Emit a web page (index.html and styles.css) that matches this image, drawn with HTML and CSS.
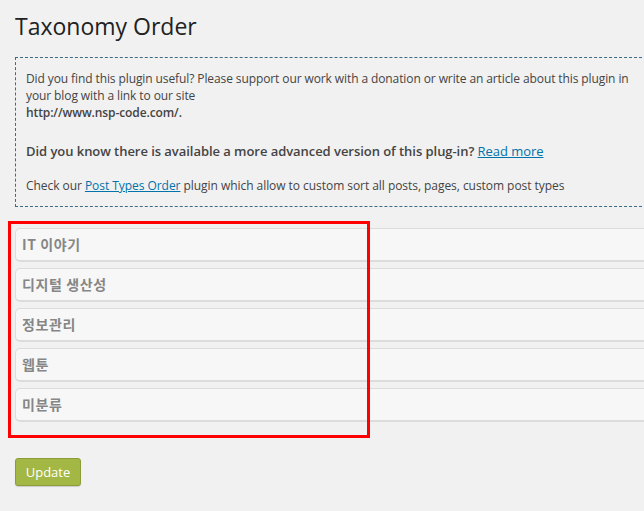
FILE: index.html
```html
<!DOCTYPE html>
<html>
<head>
<meta charset="utf-8">
<link rel="stylesheet" href="styles.css">
</head>
<body>
<div class="wrap">
  <h2 class="title">Taxonomy Order</h2>
  <div class="notice">
    <p class="notice-p">Did you find this plugin useful? Please support our work with a donation or write an article about this plugin in your blog with a link to our site<br><strong>http://www.nsp-code.com/.</strong></p>
    <p class="notice-adv">Did you know there is available a more advanced version of this plug-in? <a href="#" class="link">Read more</a></p>
    <p class="notice-small">Check our <a href="#" class="link">Post Types Order</a> plugin which allow to custom sort all posts, pages, custom post types</p>
  </div>
  <ul class="terms">
    <li class="term">IT 이야기</li>
    <li class="term">디지털 생산성</li>
    <li class="term">정보관리</li>
    <li class="term">웹툰</li>
    <li class="term">미분류</li>
  </ul>
  <button class="update">Update</button>
</div>
<div class="highlight"></div>
</body>
</html>
```
FILE: styles.css
```css
html, body {
  margin: 0;
  padding: 0;
  background: #f1f1f1;
  overflow: hidden;
}
body {
  font-family: "Open Sans", "Noto Sans", sans-serif;
  font-size: 12px;
  color: #444;
  position: relative;
  width: 644px;
  height: 511px;
}
.wrap {
  padding-left: 15px;
  width: 700px;
}
.title {
  font-size: 23px;
  font-weight: 400;
  line-height: 29px;
  color: #222;
  margin: 0;
  padding: 12px 0 0;
}
.notice {
  margin-top: 16px;
  width: 620px;
  border: 1px dashed #3a6c88;
  padding: 12px 10px 12px;
}
.notice p {
  margin: 0;
}
.notice-p {
  font-size: 12px;
  line-height: 17px;
  letter-spacing: -0.1px;
}
.notice-p strong {
  font-weight: 600;
}
.notice-adv {
  font-size: 13px;
  font-weight: 600;
  line-height: 20px;
  padding-top: 20px;
  letter-spacing: -0.05px;
}
.notice-adv .link {
  font-weight: 400;
}
.notice-small {
  font-size: 12px;
  line-height: 17px;
  padding-top: 16px;
  letter-spacing: -0.05px;
}
.link {
  color: #0073aa;
  text-decoration: underline;
}
.terms {
  list-style: none;
  margin: 21px 0 0;
  padding: 0;
}
.term {
  box-sizing: border-box;
  height: 34px;
  margin-bottom: 6px;
  background: #f7f7f7;
  border: 1px solid #dcdcdc;
  border-bottom: 2px solid #dcdcdc;
  border-radius: 5px 0 0 5px;
  padding-left: 6px;
  font-family: "Noto Sans CJK KR", sans-serif;
  font-weight: 700;
  font-size: 14px;
  letter-spacing: 0.6px;
  line-height: 30px;
  color: #868686;
}
.update {
  margin-top: 30px;
  width: 66px;
  height: 28px;
  background: #a3b745;
  border: 1px solid #8b9c3a;
  border-radius: 3px;
  color: #fff;
  font-family: "Open Sans", sans-serif;
  font-size: 13px;
  padding: 0;
  box-shadow: 0 1px 1px rgba(0,0,0,0.15);
}
.highlight {
  position: absolute;
  left: 8px;
  top: 221px;
  width: 356px;
  height: 211px;
  border: 3px solid #ff0000;
}
```
